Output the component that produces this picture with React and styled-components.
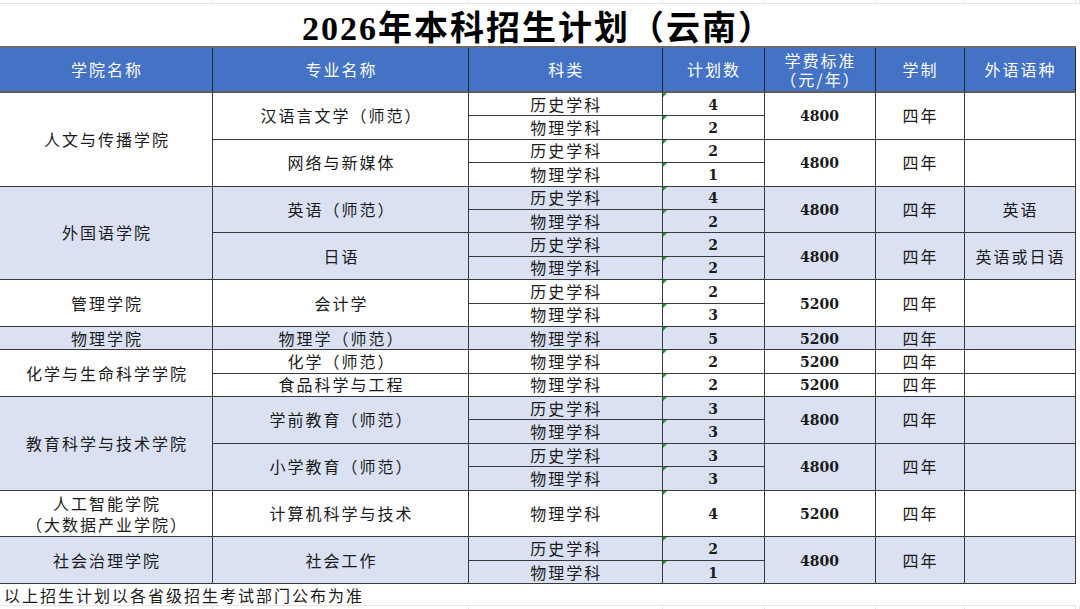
import React from 'react';
import styled, { createGlobalStyle } from 'styled-components';

const COLS = '213px 256px 193.5px 102px 111px 89px 111px';
const ROW_H = 23.4;

const GlobalStyle = createGlobalStyle`
  html, body {
    margin: 0;
    padding: 0;
    background: #fff;
  }
  body {
    font-family: "Noto Sans CJK SC", sans-serif;
    color: #1a1a1a;
  }
`;

const Page = styled.div`
  width: 1080px;
  height: 609px;
  overflow: hidden;
  background: #fff;
`;

const FaintRow = styled.div`
  display: grid;
  grid-template-columns: ${COLS} 1fr;
  height: ${p => p.$h}px;
  border-bottom: ${p => (p.$line ? '1px solid #e4e4e4' : 'none')};
  & > div {
    border-right: 1px solid #e8e8e8;
  }
`;

const Title = styled.h1`
  margin: 0;
  width: 1076px;
  height: 42px;
  display: flex;
  align-items: center;
  justify-content: center;
  font-family: "Liberation Serif", "Noto Sans CJK SC", serif;
  font-weight: 700;
  font-size: 34px;
  letter-spacing: 2px;
  color: #000;
`;

const Table = styled.div`
  display: grid;
  grid-template-columns: ${COLS};
  grid-template-rows: 45px repeat(21, ${ROW_H}px);
  width: max-content;
  border-top: 2px solid #6b6b6b;
`;

const Cell = styled.div`
  grid-column: ${p => p.$col};
  grid-row: ${p => p.$row} / span ${p => p.$span || 1};
  position: relative;
  display: flex;
  align-items: center;
  justify-content: center;
  text-align: center;
  box-sizing: border-box;
  padding-left: 2px;
  border-right: 1px solid #3a3a3a;
  border-bottom: 1px solid #3a3a3a;
  background: ${p => (p.$band ? '#d9e1f2' : '#fff')};
  font-size: 16px;
  letter-spacing: 2px;
  line-height: 21px;
  white-space: pre-line;
`;

const HeadCell = styled(Cell)`
  background: #4472c4;
  color: #fff;
  border-right-color: #1c2434;
  border-bottom: 2px solid #5c5c5c;
  line-height: 19px;
`;

const NumCell = styled(Cell)`
  font-family: "DejaVu Serif", serif;
  font-weight: 700;
  font-size: 14px;
  letter-spacing: 0;
  padding: 2px 0 0;
  color: #1a1a1a;
`;

const CountCell = styled(NumCell)`
  &::before {
    content: '';
    position: absolute;
    top: 0;
    left: 0;
    border-top: 4px solid #1f9a33;
    border-right: 4px solid transparent;
  }
`;

const Footer = styled.div`
  width: 1076px;
  height: 22px;
  padding-left: 4px;
  display: flex;
  align-items: center;
  font-size: 16px;
  letter-spacing: 2px;
  border-bottom: 1px solid #e6e6e6;
  box-sizing: border-box;
`;

const headers = ['学院名称', '专业名称', '科类', '计划数', '学费标准\n（元/年）', '学制', '外语语种'];

const H = '历史学科';
const W = '物理学科';

const colleges = [
  {
    name: '人文与传播学院',
    majors: [
      { name: '汉语言文学（师范）', fee: '4800', subjects: [[H, '4'], [W, '2']] },
      { name: '网络与新媒体', fee: '4800', subjects: [[H, '2'], [W, '1']] },
    ],
  },
  {
    name: '外国语学院',
    band: true,
    majors: [
      { name: '英语（师范）', fee: '4800', lang: '英语', subjects: [[H, '4'], [W, '2']] },
      { name: '日语', fee: '4800', lang: '英语或日语', subjects: [[H, '2'], [W, '2']] },
    ],
  },
  {
    name: '管理学院',
    majors: [{ name: '会计学', fee: '5200', subjects: [[H, '2'], [W, '3']] }],
  },
  {
    name: '物理学院',
    band: true,
    majors: [{ name: '物理学（师范）', fee: '5200', subjects: [[W, '5']] }],
  },
  {
    name: '化学与生命科学学院',
    majors: [
      { name: '化学（师范）', fee: '5200', subjects: [[W, '2']] },
      { name: '食品科学与工程', fee: '5200', subjects: [[W, '2']] },
    ],
  },
  {
    name: '教育科学与技术学院',
    band: true,
    majors: [
      { name: '学前教育（师范）', fee: '4800', subjects: [[H, '3'], [W, '3']] },
      { name: '小学教育（师范）', fee: '4800', subjects: [[H, '3'], [W, '3']] },
    ],
  },
  {
    name: '人工智能学院\n（大数据产业学院）',
    majors: [{ name: '计算机科学与技术', fee: '5200', subjects: [[W, '4', 2]] }],
  },
  {
    name: '社会治理学院',
    band: true,
    majors: [{ name: '社会工作', fee: '4800', subjects: [[H, '2'], [W, '1']] }],
  },
];

const units = subjects => subjects.reduce((n, s) => n + (s[2] || 1), 0);

function buildBody() {
  const cells = [];
  let row = 2;
  colleges.forEach((c, ci) => {
    const band = !!c.band;
    const total = c.majors.reduce((n, m) => n + units(m.subjects), 0);
    cells.push(
      <Cell key={`c${ci}`} $col={1} $row={row} $span={total} $band={band}>
        {c.name}
      </Cell>
    );
    c.majors.forEach((m, mi) => {
      const span = units(m.subjects);
      const k = `${ci}-${mi}`;
      cells.push(
        <Cell key={`m${k}`} $col={2} $row={row} $span={span} $band={band}>
          {m.name}
        </Cell>,
        <NumCell key={`f${k}`} $col={5} $row={row} $span={span} $band={band}>
          {m.fee}
        </NumCell>,
        <Cell key={`d${k}`} $col={6} $row={row} $span={span} $band={band}>
          四年
        </Cell>,
        <Cell key={`l${k}`} $col={7} $row={row} $span={span} $band={band}>
          {m.lang || ''}
        </Cell>
      );
      let r = row;
      m.subjects.forEach(([subject, count, h = 1], si) => {
        cells.push(
          <Cell key={`s${k}-${si}`} $col={3} $row={r} $span={h} $band={band}>
            {subject}
          </Cell>,
          <CountCell key={`n${k}-${si}`} $col={4} $row={r} $span={h} $band={band}>
            {count}
          </CountCell>
        );
        r += h;
      });
      row += span;
    });
  });
  return cells;
}

const blanks = Array.from({ length: 8 }, (_, i) => <div key={i} />);

export default function App() {
  return (
    <Page>
      <GlobalStyle />
      <FaintRow $h={3} $line>{blanks}</FaintRow>
      <Title>2026年本科招生计划（云南）</Title>
      <Table>
        {headers.map((h, i) => (
          <HeadCell key={h} $col={i + 1} $row={1}>
            {h}
          </HeadCell>
        ))}
        {buildBody()}
      </Table>
      <Footer>以上招生计划以各省级招生考试部门公布为准</Footer>
      <FaintRow $h={10}>{blanks}</FaintRow>
    </Page>
  );
}
